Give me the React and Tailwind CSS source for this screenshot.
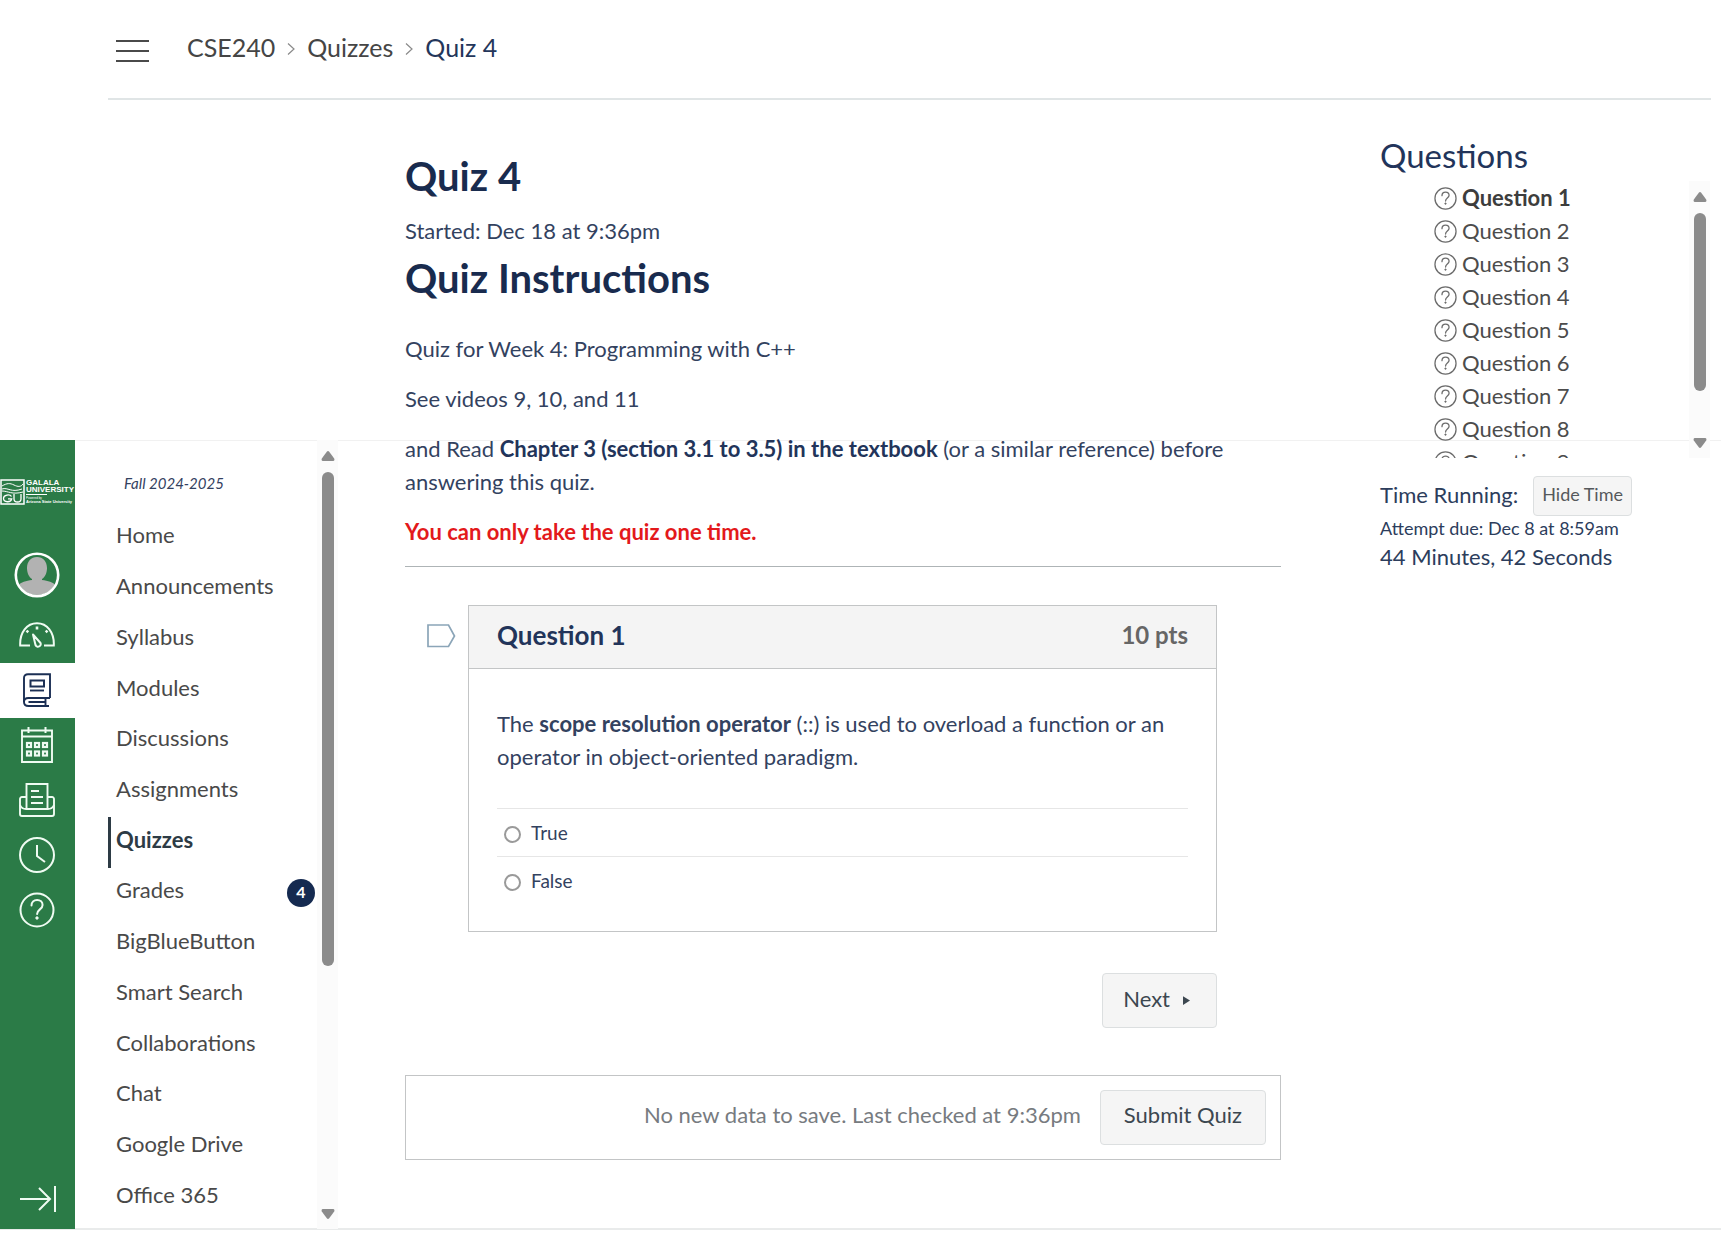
import React from "react";

const courseLinks = [
  { label: "Home" },
  { label: "Announcements" },
  { label: "Syllabus" },
  { label: "Modules" },
  { label: "Discussions" },
  { label: "Assignments" },
  { label: "Quizzes", active: true },
  { label: "Grades", badge: 4 },
  { label: "BigBlueButton" },
  { label: "Smart Search" },
  { label: "Collaborations" },
  { label: "Chat" },
  { label: "Google Drive" },
  { label: "Office 365" },
];

const questions = [1, 2, 3, 4, 5, 6, 7, 8, 9];

function QuestionMark({ className, strokeWidth = 2 }) {
  return (
    <svg viewBox="0 0 36 36" className={className} fill="none" stroke="currentColor" strokeWidth={strokeWidth} aria-hidden="true">
      <circle cx="18" cy="18" r="16.5" />
      <path d="M12.5 13.500c0-3.400 2.400-5.600 5.600-5.600s5.500 2.100 5.500 5.100c0 4.300-5.500 4.500-5.500 9" strokeLinecap="round" />
      <circle cx="18" cy="26" r="1.200" fill="currentColor" strokeWidth="1" />
    </svg>
  );
}

function AvatarIcon() {
  return (
    <svg viewBox="0 0 46 46" className="size-[46px]" aria-hidden="true">
      <defs>
        <clipPath id="avatar-clip">
          <circle cx="23" cy="23" r="20" />
        </clipPath>
      </defs>
      <g clipPath="url(#avatar-clip)" fill="#b2b2b2">
        <path d="M23 5c6 0 10 4.500 10 11 0 5-2 9-5 11v1c6 1 11 1.500 14 6v10H4V34c3-4.500 8-5 14-6v-1c-3-2-5-6-5-11 0-6.500 4-11 10-11z" />
      </g>
      <circle cx="23" cy="23" r="21.200" fill="none" stroke="#fff" strokeWidth="2.600" />
    </svg>
  );
}

function DashboardIcon() {
  return (
    <svg viewBox="0 0 36 26" className="h-[26px] w-9" fill="none" stroke="currentColor" strokeWidth="2" aria-hidden="true">
      <path d="M11 23.500H1.200C.6 10 8 1.200 18 1.200S35.400 10 34.800 23.500H25" />
      <path d="M14 12.500l7.500 8.500c1.500 3-3.500 5.500-5 2z" strokeLinejoin="round" />
      <path d="M18 4.500v3M9.300 10.200l-1.800-1.600M26.700 10.200l1.800-1.600" strokeWidth="2.600" />
    </svg>
  );
}

function CoursesIcon() {
  return (
    <svg viewBox="0 0 28 34" className="h-[34px] w-7" fill="none" stroke="currentColor" strokeWidth="1.900" aria-hidden="true">
      <path d="M27 25V1.200H5C2.500 1.200 1 2.700 1 5v24" />
      <path d="M27 25H5.500C2.500 25 1 26.600 1 29s1.500 4 4.500 4H26M22.500 25v8M5.500 29h17" />
      <rect x="7.500" y="7.500" width="13.500" height="6" strokeWidth="2" />
      <path d="M7 17.500h14" />
    </svg>
  );
}

function CalendarIcon() {
  return (
    <svg viewBox="0 0 32 36" className="h-9 w-8" fill="none" stroke="currentColor" strokeWidth="1.900" aria-hidden="true">
      <path d="M1 3.500h30V35H1zM1 9.500h30" />
      <path d="M7.500 0v6M24.500 0v6" strokeWidth="2" />
      <g strokeWidth="2.200">
        <rect x="6" y="16" width="4" height="4" />
        <rect x="14" y="16" width="4" height="4" />
        <rect x="22" y="16" width="4" height="4" />
        <rect x="6" y="24.500" width="4" height="4" />
        <rect x="14" y="24.500" width="4" height="4" />
        <rect x="22" y="24.500" width="4" height="4" />
      </g>
    </svg>
  );
}

function InboxIcon() {
  return (
    <svg viewBox="0 0 36 34" className="h-[34px] w-9" fill="none" stroke="currentColor" strokeWidth="1.900" aria-hidden="true">
      <path d="M7.500 26V1h21v25" />
      <path d="M7 14H3c-1.200 0-2 .8-2 2v15c0 1.200.8 2 2 2h30c1.200 0 2-.8 2-2V16c0-1.200-.8-2-2-2h-4" />
      <path d="M1 22c1 2.500 3 4 6 4h22c3 0 5-1.500 6-4" />
      <path d="M12 8h8M12 14h12M12 20h12" />
    </svg>
  );
}

function ClockIcon() {
  return (
    <svg viewBox="0 0 36 36" className="size-9" fill="none" stroke="currentColor" strokeWidth="2" aria-hidden="true">
      <circle cx="18" cy="18" r="17" />
      <path d="M18 8v11l8 6" />
    </svg>
  );
}

function Logo() {
  return (
    <a href="#university" className="flex h-[26px] items-start gap-px text-white" aria-label="Galala University">
      <svg viewBox="0 0 25 26" className="h-[26px] w-[25px] shrink-0" fill="none" stroke="currentColor" aria-hidden="true">
        <rect x="1" y="1" width="23" height="24" strokeWidth="1.500" />
        <path d="M2 7c5-3 8-3 12-1s7 2 9-1M2 10c6-2 9 4 20 0M2 12c6 0 10 4 21 1" strokeWidth="1" />
        <path d="M11.500 17.500c-1.500-2.500-8-2-8 1.800 0 4.500 7.500 4.500 8.200.6H8M14 15v5c0 4 7 4 7 0v-5" strokeWidth="1.300" />
      </svg>
      <span className="flex flex-col font-['Liberation_Sans',sans-serif] text-[8px] leading-[7px] font-bold whitespace-nowrap">
        <span>GALALA</span>
        <span>UNIVERSITY</span>
        <span className="mt-px h-px w-[21px] bg-white" />
        <span className="mt-px text-[3px] leading-[4px] font-normal">Powered by</span>
        <span className="text-[4px] leading-[4px]">Arizona State University</span>
      </span>
    </a>
  );
}

function GlobalLink({ label, active, children }) {
  return (
    <a
      href={"#" + label.toLowerCase()}
      aria-label={label}
      className={
        active
          ? "flex h-[55px] items-center justify-center bg-white pr-px pb-0.5 text-[#1b2f54]"
          : "flex h-[55px] items-center justify-center pr-px pb-0.5 text-[#effbf2]"
      }
    >
      {children}
    </a>
  );
}

function ScrollTrack({ thumb }) {
  return (
    <div className="flex w-[21px] shrink-0 flex-col items-center bg-[#fbfbfb] pt-[11px] pb-[10px]" aria-hidden="true">
      <svg viewBox="0 0 14 10" className="h-[10px] w-[14px] shrink-0" fill="#8b8b8b">
        <path d="M5.800.8Q7-.6 8.200.8l5 6.800Q14 10 12 10H2Q0 10 .8 7.600z" />
      </svg>
      <div className="mt-[11px] flex w-3 flex-1 flex-col">
        <div className={thumb} />
      </div>
      <svg viewBox="0 0 14 10" className="h-[10px] w-[14px] shrink-0" fill="#8b8b8b">
        <path d="M5.800 9.200Q7 10.600 8.200 9.200l5-6.800Q14 0 12 0H2Q0 0 .8 2.400z" />
      </svg>
    </div>
  );
}

function Chevron() {
  return (
    <svg viewBox="0 0 8 12" className="mt-1 h-3 w-2" fill="none" stroke="#8a8a8a" strokeWidth="1.200" aria-hidden="true">
      <path d="M1 .5L7 6l-6 5.500" />
    </svg>
  );
}

function Header() {
  return (
    <header className="mr-[10px] ml-[108px] flex h-[100px] items-start border-b-2 border-[#e0e5e6] pl-2">
      <button type="button" aria-label="Toggle course navigation" className="mt-[40px] flex w-[33px] flex-col gap-2">
        <span className="h-[2px] bg-[#4a4a4a]" />
        <span className="h-[2px] bg-[#4a4a4a]" />
        <span className="h-[2px] bg-[#4a4a4a]" />
      </button>
      <nav aria-label="Breadcrumb" className="mt-8 ml-[38px] flex items-center gap-3 text-[25px] leading-[30px] text-[#454545]">
        <a href="#course">CSE240</a>
        <Chevron />
        <a href="#quizzes">Quizzes</a>
        <Chevron />
        <a href="#quiz" className="text-[#24365a]">Quiz 4</a>
      </nav>
    </header>
  );
}

function GlobalNav() {
  return (
    <nav aria-label="Global" className="flex w-[75px] shrink-0 flex-col bg-[#2b7b47] pt-[39px]">
      <Logo />
      <a href="#account" aria-label="Account" className="mt-[47px] mb-[10px] flex justify-center pr-px">
        <AvatarIcon />
      </a>
      <GlobalLink label="Dashboard"><DashboardIcon /></GlobalLink>
      <GlobalLink label="Courses" active><CoursesIcon /></GlobalLink>
      <GlobalLink label="Calendar"><CalendarIcon /></GlobalLink>
      <GlobalLink label="Inbox"><InboxIcon /></GlobalLink>
      <GlobalLink label="History"><ClockIcon /></GlobalLink>
      <GlobalLink label="Help"><QuestionMark className="size-9" strokeWidth={2} /></GlobalLink>
      <button type="button" aria-label="Expand global navigation" className="mt-auto mb-[17px] flex justify-center text-[#effbf2]">
        <svg viewBox="0 0 36 26" className="h-[26px] w-9" fill="none" stroke="currentColor" strokeWidth="2" aria-hidden="true">
          <path d="M0 13h30M19 2l11 11-11 11M35 0v26" />
        </svg>
      </button>
    </nav>
  );
}

function CourseNav() {
  return (
    <nav aria-label="Course" className="flex flex-1 flex-col pt-[31px] pb-1.5">
      <p className="mb-[18px] pl-[49px] text-[15px] leading-6 text-[#33415f] italic">Fall 2024-2025</p>
      <ul className="flex flex-1 flex-col pl-[33px]">
        {courseLinks.map((item) => (
          <li key={item.label} className="flex min-h-10 flex-1">
            <a
              href={"#" + item.label}
              className={
                item.active
                  ? "flex flex-1 items-center border-l-[3px] border-[#2d3b45] pr-0.5 pl-[5px] text-[22px] leading-7 font-bold text-[#2d3b45]"
                  : "flex flex-1 items-center pr-0.5 pl-2 text-[22px] leading-7 text-[#494949]"
              }
            >
              <span className="pb-1.5">{item.label}</span>
              {item.badge && (
                <span className="ml-auto flex size-7 items-center justify-center rounded-full bg-[#152a50] pb-0.5 text-base leading-none font-bold text-white">
                  {item.badge}
                </span>
              )}
            </a>
          </li>
        ))}
      </ul>
    </nav>
  );
}

function QuestionCard() {
  return (
    <div className="mt-[38px] flex pr-16">
      <button type="button" aria-label="Flag question" className="mt-[19px] ml-[22px] h-6 w-[29px] shrink-0 text-[#8ba5b8]">
        <svg viewBox="0 0 29 24" className="h-6 w-[29px]" fill="none" stroke="currentColor" strokeWidth="1.700" aria-hidden="true">
          <path d="M1 1h20.500l6 11-6 10.500H1z" />
        </svg>
      </button>
      <section className="ml-3 flex-1 border border-[#c3c5c6]">
        <div className="flex items-center justify-between border-b border-[#c3c5c6] bg-[#f4f4f4] px-7 pt-[11px] pb-[15px] font-bold">
          <h3 className="text-[26px] leading-9 text-[#22345a]">Question 1</h3>
          <span className="text-2xl leading-9 text-[#666]">10 pts</span>
        </div>
        <div className="px-7 pt-[38px] pb-[27px]">
          <p className="text-[22px] leading-[33px]">
            The <b>scope resolution operator</b> (::) is used to overload a function or an operator in object-oriented paradigm.
          </p>
          <fieldset className="mt-[35px]">
            {["True", "False"].map((answer) => (
              <label key={answer} className="flex h-12 items-center gap-[10px] border-t border-[#e6e6e6] pl-[7px] text-[19px] leading-6">
                <input
                  type="radio"
                  name="question-1"
                  className="mt-1 size-[17px] appearance-none rounded-full border-2 border-[#9a9a9a] bg-white checked:bg-[#22345a]"
                />
                {answer}
              </label>
            ))}
          </fieldset>
        </div>
      </section>
    </div>
  );
}

function Quiz() {
  return (
    <main className="mr-[99px] ml-[65px] min-w-0 flex-1 pt-[52px] text-[22px] leading-[33px] text-[#33425f]">
      <h1 className="text-[40px] leading-12 font-bold text-[#192b4e]">Quiz 4</h1>
      <p className="mt-[14px]">Started: Dec 18 at 9:36pm</p>
      <h2 className="mt-[7px] text-[40px] leading-12 font-bold text-[#192b4e]">Quiz Instructions</h2>
      <div className="mt-[30px] flex flex-col gap-[17px]">
        <p>Quiz for Week 4: Programming with C++</p>
        <p>See videos 9, 10, and 11</p>
        <p>
          and Read <b className="text-[#22345a]">Chapter 3 (section 3.1 to 3.5) in the textbook</b> (or a similar reference) before
          answering this quiz.
        </p>
        <p className="font-bold text-[#e3191b]">You can only take the quiz one time.</p>
      </div>
      <hr className="mt-[18px] border-[#aeb4b6]" />
      <QuestionCard />
      <div className="mt-[41px] flex justify-end pr-16">
        <button type="button" className="flex h-[55px] items-center gap-[13px] rounded border border-[#dcdfe0] bg-[#f5f5f5] pr-[26px] pb-1 pl-5 text-[#3c4750]">
          Next
          <svg viewBox="0 0 8 10" className="mt-[3px] h-[9px] w-[7px]" fill="currentColor" aria-hidden="true">
            <path d="M0 0l8 5-8 5z" />
          </svg>
        </button>
      </div>
      <div className="mt-[47px] flex items-center justify-end gap-[19px] border border-[#c3c5c6] py-[14px] pr-[14px]">
        <span className="pb-1.5 text-[#777b80]">No new data to save. Last checked at 9:36pm</span>
        <button type="button" className="h-[55px] rounded border border-[#dcdfe0] bg-[#f5f5f5] px-[23px] pb-1.5 text-[#3c4750]">
          Submit Quiz
        </button>
      </div>
    </main>
  );
}

function QuestionsPanel() {
  return (
    <aside className="w-[341px] shrink-0 pt-[34px] text-[#2c3d5c]">
      <h2 className="text-[33px] leading-[42px] text-[#22345a]">Questions</h2>
      <div className="mt-[5px] mr-[11px] flex h-[277px] overflow-hidden">
        <ul className="flex-1 overflow-hidden pl-[54px]">
          {questions.map((n) => (
            <li key={n}>
              <a
                href={"#question-" + n}
                className={
                  n === 1
                    ? "flex items-center gap-[5px] text-[22px] leading-[33px] font-bold text-[#3d3d3d]"
                    : "flex items-center gap-[5px] text-[22px] leading-[33px] text-[#4c4c4c]"
                }
              >
                <QuestionMark className="mt-px size-[23px] text-[#6c6c6c]" strokeWidth={2} />
                Question {n}
              </a>
            </li>
          ))}
        </ul>
        <ScrollTrack thumb="h-[178px] rounded-full bg-[#8b8b8b]" />
      </div>
      <div className="mt-[18px] flex items-center gap-[15px]">
        <span className="pb-1 text-[22px] leading-[33px]">Time Running:</span>
        <button type="button" className="h-10 rounded border border-[#dcdfe0] bg-[#f5f5f5] px-2 pb-1 text-lg leading-6 text-[#55595c]">
          Hide Time
        </button>
      </div>
      <p className="text-lg leading-6">Attempt due: Dec 8 at 8:59am</p>
      <p className="text-[22px] leading-[33px]">44 Minutes, 42 Seconds</p>
    </aside>
  );
}

export default function App() {
  return (
    <div className="relative isolate flex min-h-screen flex-col bg-white pb-[24px] font-['Lato',sans-serif]">
      <Header />
      <div className="flex flex-1 border-b-2 border-[#e9ebeb]">
        <div className="mt-[340px] -mb-px flex w-[340px] shrink-0 pr-0.5">
          <GlobalNav />
          <CourseNav />
          <ScrollTrack thumb="h-[67%] rounded-full bg-[#8b8b8b]" />
        </div>
        <Quiz />
        <QuestionsPanel />
      </div>
      <div className="pointer-events-none absolute top-[440px] right-0 left-[75px] -z-10 h-px bg-[#f1f1f1]" />
    </div>
  );
}
